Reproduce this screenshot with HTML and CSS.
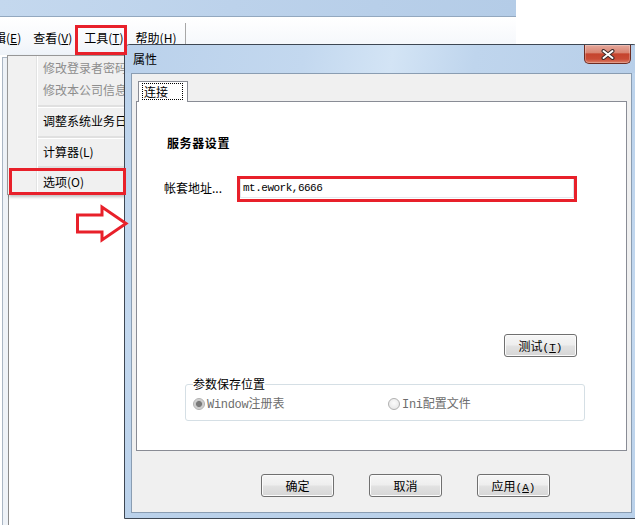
FILE: index.html
```html
<!DOCTYPE html>
<html>
<head>
<meta charset="utf-8">
<title>属性</title>
<link rel="stylesheet" href="styles.css">
</head>
<body>
<div class="app">
  <div class="app-title"></div>
  <div class="app-menubar">
    <span class="mb-item first">编辑(<u>E</u>)</span>
    <span class="mb-item">查看(<u>V</u>)</span>
    <span class="mb-item">工具(<u>T</u>)</span>
    <span class="mb-item">帮助(<u>H</u>)</span>
    <span class="mb-sep"></span>
  </div>
  <div class="app-body">
    <div class="rail"></div>
    <div class="workspace"></div>
  </div>
</div>

<div class="dropdown">
  <div class="dd-item disabled">修改登录者密码</div>
  <div class="dd-item disabled">修改本公司信息</div>
  <div class="dd-sep"></div>
  <div class="dd-item">调整系统业务日期</div>
  <div class="dd-sep"></div>
  <div class="dd-item">计算器(L)</div>
  <div class="dd-sep short"></div>
  <div class="dd-item">选项(O)</div>
</div>

<div class="dialog">
  <div class="dlg-title">
    <span class="dlg-caption">属性</span>
    <div class="close-btn">
      <svg width="14" height="11" viewBox="0 0 14 11">
        <path d="M2.5 2 L11.5 9 M11.5 2 L2.5 9" stroke="#3b2b2b" stroke-width="4" stroke-linecap="round" fill="none"/>
        <path d="M2.5 2 L11.5 9 M11.5 2 L2.5 9" stroke="#ffffff" stroke-width="2" stroke-linecap="round" fill="none"/>
      </svg>
    </div>
  </div>
  <div class="dlg-client">
    <div class="tabs">
      <div class="tab"><span class="focus">连接</span></div>
    </div>
    <div class="tab-panel">
      <div class="section-title">服务器设置</div>
      <div class="field-row">
        <span class="field-label">帐套地址...</span>
        <div class="textbox">mt.ework,6666</div>
      </div>
      <div class="test-row">
        <button class="btn">测试<span class="mono">(<u>T</u>)</span></button>
      </div>
      <fieldset class="group">
        <legend>参数保存位置</legend>
        <div class="radios">
          <span class="radio checked"><i></i><span class="radio-text"><span class="mono">Window</span>注册表</span></span>
          <span class="radio"><i></i><span class="radio-text"><span class="mono">Ini</span>配置文件</span></span>
        </div>
      </fieldset>
    </div>
    <div class="dlg-buttons">
      <button class="btn">确定</button>
      <button class="btn">取消</button>
      <button class="btn">应用<span class="mono">(<u>A</u>)</span></button>
    </div>
  </div>
</div>

<div class="mark mark-tools"></div>
<div class="mark mark-option"></div>
<div class="mark mark-input"></div>
<svg class="arrow" width="56" height="40" viewBox="0 0 56 40">
  <polygon points="3.5,11 28,11 28,3 52,19.5 28,36 28,28 3.5,28" fill="none" stroke="#e8202a" stroke-width="3" stroke-linejoin="miter"/>
</svg>
</body>
</html>
```

FILE: styles.css
```css
* { box-sizing: border-box; }
html, body { margin: 0; padding: 0; }
body {
  width: 635px;
  height: 525px;
  overflow: hidden;
  position: relative;
  background: #fff;
  font-family: "Noto Sans CJK SC", "Noto Sans", sans-serif;
  font-size: 12px;
  color: #000;
}
.mono { font-family: "Liberation Mono", "Noto Sans CJK SC", monospace; }

/* ---------- background application window ---------- */
.app { width: 635px; height: 525px; }
.app-title {
  width: 516px;
  height: 17px;
  background: linear-gradient(100deg, #c4d8ee 0%, #bcd2eb 45%, #b4cce7 100%);
  border-bottom: 1px solid #93a8bf;
}
.app-menubar {
  width: 516px;
  height: 38px;
  display: flex;
  align-items: flex-start;
  gap: 12px;
  background: linear-gradient(to bottom, #ffffff 0%, #f7f9fc 60%, #eef3f9 100%);
}
.mb-item { margin-top: 14px; line-height: 14px; white-space: nowrap; }
.mb-item.first { margin-left: -18px; }
.mb-item u { text-underline-offset: 1px; }
.mb-sep { margin-top: 6px; margin-left: -3px; width: 1px; height: 24px; background: #a7a7a7; }

.app-body { display: flex; margin-top: 2px; height: 468px; }
.rail {
  margin-left: 2px;
  width: 7px;
  border-left: 1px solid #aab6c4;
  border-right: 1px solid #8a8a8a;
  border-top: 1px solid #aab6c4;
  background: #eef2f7;
}
.workspace { flex: 1; background: #fff; }

/* ---------- dropdown menu ---------- */
.dropdown {
  position: absolute;
  left: 7px;
  top: 55px;
  width: 200px;
  padding: 1px;
  border: 1px solid #979797;
  background: linear-gradient(to right, #f1f1f1 0 28px, #e2e3e3 28px 29px, #ffffff 29px 30px, #f0f0f0 30px);
  box-shadow: 2px 2px 3px rgba(0,0,0,0.25);
}
.dd-item { height: 22px; line-height: 22px; padding-left: 34px; white-space: nowrap; color: #000; }
.dd-item.disabled { color: #8d8d8d; }
.dd-sep { height: 9px; padding: 4px 0 0 29px; }
.dd-sep.short { height: 8px; padding-top: 3px; }
.dd-sep::before {
  content: "";
  display: block;
  height: 2px;
  background: #e0e0e0;
  border-bottom: 1px solid #ffffff;
}

/* ---------- dialog ---------- */
.dialog {
  position: absolute;
  left: 124px;
  top: 44px;
  width: 515px;
  height: 475px;
  border: 1px solid #3e4753;
  border-radius: 6px 6px 0 0;
  background: linear-gradient(to bottom, #c0d6ee 0%, #bcd3ec 10%, #c3d8ef 60%, #bad1ea 100%);
  display: flex;
  flex-direction: column;
  z-index: 5;
}
.dlg-title {
  height: 28px;
  display: flex;
  align-items: flex-start;
  background: linear-gradient(100deg, #bad1eb 0%, #c3d8ef 35%, #d3e4f5 52%, #bfd5ed 68%, #b8cfe9 100%);
  border-radius: 5px 5px 0 0;
}
.dlg-caption { padding-left: 8px; line-height: 28px; color: #000; }
.close-btn {
  margin-left: auto;
  margin-right: 7px;
  width: 47px;
  height: 19px;
  border: 1px solid #6d2c22;
  border-top: none;
  border-radius: 0 0 5px 5px;
  background: linear-gradient(to bottom, #e6a89c 0%, #d98572 42%, #c5442e 50%, #c94b35 78%, #dc8068 100%);
  box-shadow: inset 0 0 0 1px rgba(255,255,255,0.25);
  display: flex;
  align-items: center;
  justify-content: center;
}
.dlg-client {
  flex: 1;
  margin: 0 6px 5px 6px;
  border: 1px solid #8a9db2;
  background: #f0f0f0;
  display: flex;
  flex-direction: column;
}

.tabs { padding: 7px 0 0 6px; display: flex; }
.tab {
  position: relative;
  z-index: 1;
  width: 50px;
  height: 21px;
  margin-bottom: -1px;
  border: 1px solid #898c95;
  border-bottom: none;
  background: #fff;
  padding: 1px 4px 0 3px;
}
.focus {
  display: block;
  height: 17px;
  border: 1px dotted #000;
  padding-left: 1px;
  line-height: 15px;
}

.tab-panel {
  margin: 0 4px;
  height: 350px;
  border: 1px solid #898c95;
  background: #fff;
  display: flex;
  flex-direction: column;
  align-items: flex-start;
}
.section-title {
  margin-top: 33px;
  padding-left: 30px;
  line-height: 16px;
  font-weight: 700;
  letter-spacing: 0.6px;
}
.field-row {
  margin-top: 27px;
  padding-left: 27px;
  display: flex;
  align-items: center;
}
.field-label { width: 76px; line-height: 16px; white-space: nowrap; }
.textbox {
  width: 334px;
  height: 20px;
  border: 1px solid;
  border-color: #abadb3 #dbdfe6 #e3e9ef #e2e3ea;
  background: #fff;
  padding-left: 2px;
  font-family: "Liberation Mono", monospace;
  font-size: 11px;
  letter-spacing: -0.5px;
  line-height: 18px;
}
.test-row {
  align-self: stretch;
  margin-top: 136px;
  padding-right: 49px;
  display: flex;
  justify-content: flex-end;
}

.btn {
  width: 73px;
  height: 23px;
  padding: 0;
  border: 1px solid #707070;
  border-radius: 3px;
  background: linear-gradient(to bottom, #f6f6f6 0%, #eeeeee 48%, #e2e2e2 52%, #d6d6d6 100%);
  box-shadow: inset 0 0 0 1px #fbfbfb;
  font-family: "Noto Sans CJK SC", sans-serif;
  font-size: 12px;
  line-height: 21px;
  color: #000;
}
.btn .mono { font-size: 11px; }

.group {
  margin: 20px 0 0 48px;
  width: 400px;
  padding: 5px 7px 8px 7px;
  border: 1px solid #d5dfe5;
  border-radius: 3px;
  min-inline-size: 0;
}
.group legend {
  padding: 0;
  line-height: 14px;
  color: #000;
}
.radios {
  display: grid;
  grid-template-columns: 195px auto;
  line-height: 14px;
}
.radio { display: flex; align-items: center; gap: 2px; color: #6d6d6d; white-space: nowrap; }
.radio-text { white-space: nowrap; }
.radio .mono { font-size: 12px; letter-spacing: -0.3px; }
.radio i {
  display: block;
  width: 12px;
  height: 12px;
  border-radius: 50%;
  border: 1px solid #b0b0b0;
  background: radial-gradient(circle at 50% 40%, #fbfbfb 0%, #e2e2e2 100%);
}
.radio.checked i {
  background: radial-gradient(circle, #7a7a7a 0 2.6px, #c6c6c6 3.4px, #efefef 100%);
}

.dlg-buttons {
  margin-top: 23px;
  padding-left: 129px;
  display: flex;
  gap: 35px;
}

/* ---------- red annotations ---------- */
.mark { position: absolute; border: 3px solid #e8202a; z-index: 10; }
.mark-tools { left: 75px; top: 25px; width: 52px; height: 30px; }
.mark-option { left: 9px; top: 168px; width: 117px; height: 27px; }
.mark-input { left: 237px; top: 176px; width: 340px; height: 26px; }
.arrow { position: absolute; left: 74px; top: 204px; z-index: 10; }
```
